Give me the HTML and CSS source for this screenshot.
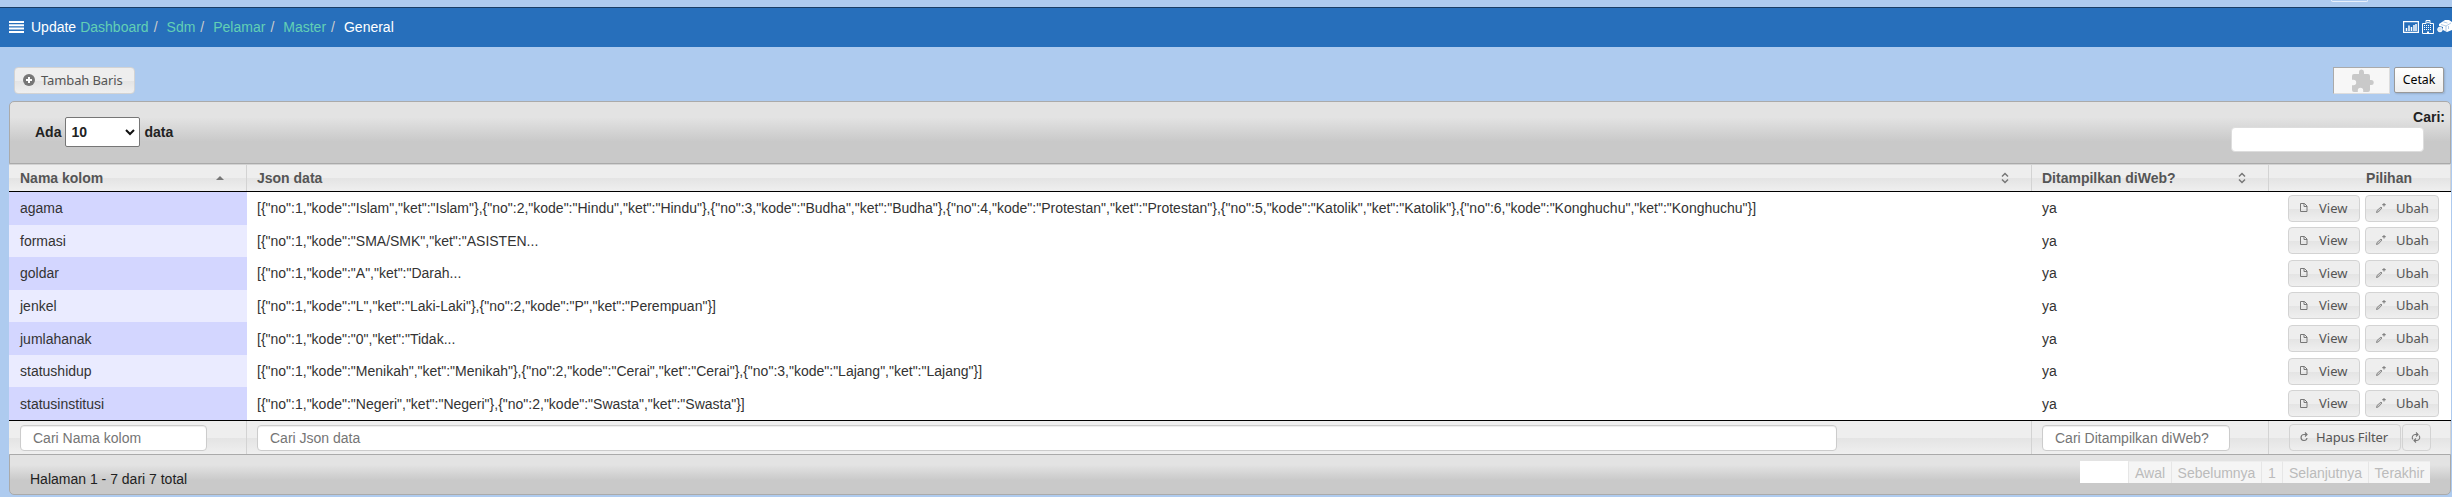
FILE: index.html
```html
<!DOCTYPE html>
<html lang="id">
<head>
<meta charset="utf-8">
<title>General</title>
<link rel="stylesheet" href="styles.css">
</head>
<body>
<svg class="defs" width="0" height="0">
  <symbol id="doc" viewBox="0 0 9 9"><path d="M1.500.5h4l2.500 2.500v5.500h-6.500zM5 .5v3h3" fill="none" stroke="#777"/></symbol>
  <symbol id="pen" viewBox="0 0 10 10"><path d="M.5 9.500l.5-2 4-3.500 1 1-3.700 4z" fill="#ccc" stroke="#777" stroke-width=".8"/><path d="M8 0v3.500M6.200 1.700h3.600" stroke="#777" fill="none"/></symbol>
  <symbol id="sort" viewBox="0 0 8 12"><path d="M1 4.500l3-3 3 3M1 7.500l3 3 3-3" fill="none" stroke="#777" stroke-width="1.500"/></symbol>
</svg>
<div class="strip"><span class="tab"></span></div>
<nav class="navbar">
  <svg class="bars" width="15" height="12" viewBox="0 0 15 12"><path d="M0 1h15M0 4.300h15M0 7.600h15M0 10.900h15" stroke="#fff" stroke-width="2"/></svg>
  <span class="brand">Update</span>
  <a>Dashboard</a><i>/</i><a>Sdm</a><i>/</i><a>Pelamar</a><i>/</i><a>Master</a><i>/</i><b>General</b>
  <span class="tools">
    <svg width="16" height="12" viewBox="0 0 16 12"><path d="M.6.6h14.800v10.800H.6z" fill="none" stroke="#fff" stroke-width="1.200"/><path d="M3.500 10V7M6 10V4.500M8.500 10V6M11 10V4M13 10V3" stroke="#fff" stroke-width="1.500"/></svg>
    <svg width="12" height="14" viewBox="0 0 12 14"><path d="M.5 13.500V3.500H4V.5h4v3h3.500v10z" fill="none" stroke="#fff"/><path d="M2 5.500h8M2 7.500h8M2 9.500h8" stroke="#fff" stroke-dasharray="1 1" stroke-width="1.200"/><path d="M5 1.500v2M7 1.500v2M5 2.500h2" stroke="#fff" stroke-width=".7"/><path d="M5 11.500h2V14H5z" fill="#fff"/></svg>
    <svg width="15" height="14" viewBox="0 0 15 14"><path fill="#fff" d="M2 4l6-4h4l3 2v8l-5 2-4-2V7L2 6z"/><circle cx="3" cy="9.500" r="2.300" fill="#d8e6f5" stroke="#fff"/><path d="M4 4.500l5 1.500 5-3M9 6v5M6.500 2l4 1M11.500 6v3" fill="none" stroke="#8fb4dc" stroke-width=".7"/></svg>
  </span>
</nav>
<div class="actions">
  <button class="btn add"><svg width="12" height="12" viewBox="0 0 12 12"><circle cx="6" cy="6" r="6" fill="#777"/><path d="M6 3v6M3 6h6" stroke="#fff" stroke-width="2"/></svg>Tambah Baris</button>
  <span class="right">
    <span class="plugin"><svg width="24" height="24" viewBox="0 0 24 24"><path fill="#c9c9c9" d="M21.200 11H20V7a2 2 0 0 0-2-2h-4V3a2.500 2.500 0 0 0-5 0v2H4a2 2 0 0 0-2 2v3.800h1.500a2.700 2.700 0 0 1 0 5.400H2V21a2 2 0 0 0 2 2h3.800v-1.500a2.700 2.700 0 0 1 5.400 0V23H18a2 2 0 0 0 2-2v-5h1.200a2.500 2.500 0 0 0 0-5z"/></svg></span>
    <button class="print">Cetak</button>
  </span>
</div>
<main class="grid">
  <div class="panel top">
    <label class="length">Ada <span class="select">10<svg width="10" height="7" viewBox="0 0 10 7"><path d="M1 1l4 4 4-4" fill="none" stroke="#111" stroke-width="2"/></svg></span> data</label>
    <label class="search">Cari:<input></label>
  </div>
  <div class="row head">
    <div>Nama kolom<svg class="asc" width="8" height="4" viewBox="0 0 8 4"><path d="M0 4l4-4 4 4z" fill="#777"/></svg></div>
    <div>Json data<svg class="both"><use href="#sort"/></svg></div>
    <div>Ditampilkan diWeb?<svg class="both"><use href="#sort"/></svg></div>
    <div>Pilihan</div>
  </div>
  <div class="body">
    <div class="row"><div>agama</div><div>[{"no":1,"kode":"Islam","ket":"Islam"},{"no":2,"kode":"Hindu","ket":"Hindu"},{"no":3,"kode":"Budha","ket":"Budha"},{"no":4,"kode":"Protestan","ket":"Protestan"},{"no":5,"kode":"Katolik","ket":"Katolik"},{"no":6,"kode":"Konghuchu","ket":"Konghuchu"}]</div><div>ya</div><div><button class="btn view"><svg><use href="#doc"/></svg>View</button><button class="btn edit"><svg><use href="#pen"/></svg>Ubah</button></div></div>
    <div class="row"><div>formasi</div><div>[{"no":1,"kode":"SMA/SMK","ket":"ASISTEN...</div><div>ya</div><div><button class="btn view"><svg><use href="#doc"/></svg>View</button><button class="btn edit"><svg><use href="#pen"/></svg>Ubah</button></div></div>
    <div class="row"><div>goldar</div><div>[{"no":1,"kode":"A","ket":"Darah...</div><div>ya</div><div><button class="btn view"><svg><use href="#doc"/></svg>View</button><button class="btn edit"><svg><use href="#pen"/></svg>Ubah</button></div></div>
    <div class="row"><div>jenkel</div><div>[{"no":1,"kode":"L","ket":"Laki-Laki"},{"no":2,"kode":"P","ket":"Perempuan"}]</div><div>ya</div><div><button class="btn view"><svg><use href="#doc"/></svg>View</button><button class="btn edit"><svg><use href="#pen"/></svg>Ubah</button></div></div>
    <div class="row"><div>jumlahanak</div><div>[{"no":1,"kode":"0","ket":"Tidak...</div><div>ya</div><div><button class="btn view"><svg><use href="#doc"/></svg>View</button><button class="btn edit"><svg><use href="#pen"/></svg>Ubah</button></div></div>
    <div class="row"><div>statushidup</div><div>[{"no":1,"kode":"Menikah","ket":"Menikah"},{"no":2,"kode":"Cerai","ket":"Cerai"},{"no":3,"kode":"Lajang","ket":"Lajang"}]</div><div>ya</div><div><button class="btn view"><svg><use href="#doc"/></svg>View</button><button class="btn edit"><svg><use href="#pen"/></svg>Ubah</button></div></div>
    <div class="row"><div>statusinstitusi</div><div>[{"no":1,"kode":"Negeri","ket":"Negeri"},{"no":2,"kode":"Swasta","ket":"Swasta"}]</div><div>ya</div><div><button class="btn view"><svg><use href="#doc"/></svg>View</button><button class="btn edit"><svg><use href="#pen"/></svg>Ubah</button></div></div>
  </div>
  <div class="row foot">
    <div><input class="f1" placeholder="Cari Nama kolom"></div>
    <div><input class="f2" placeholder="Cari Json data"></div>
    <div><input class="f3" placeholder="Cari Ditampilkan diWeb?"></div>
    <div><button class="btn clear"><svg width="9" height="10" viewBox="0 0 9 10"><path d="M6.500 2.500H4A3 3 0 1 0 7 6M5 .5l2 2-2 2" fill="none" stroke="#777" stroke-width="1.200"/></svg>Hapus Filter</button><button class="btn refresh"><svg width="10" height="11" viewBox="0 0 10 11"><path d="M6.500 2.500H4A3 3 0 0 0 2 7.500M5 .5l2 2-2 2M3.500 8.500H6a3 3 0 0 0 2-5M5 6.500l-2 2 2 2" fill="none" stroke="#777" stroke-width="1.100"/></svg></button></div>
  </div>
  <div class="panel bottom">
    <span class="info">Halaman 1 - 7 dari 7 total</span>
    <div class="pager"><span class="p1">Awal</span><span class="p2">Sebelumnya</span><span class="p3">1</span><span class="p4">Selanjutnya</span><span class="p5">Terakhir</span></div>
  </div>
</main>
</body>
</html>
```
FILE: styles.css
```css
* { box-sizing: border-box; }
body { margin: 0; height: 497px; overflow: hidden; background: #aecbef; font: 14px/20px "Liberation Sans", Arial, sans-serif; color: #333; }
svg { display: block; flex: none; }
.defs { position: absolute; }
.strip { height: 7px; padding-left: 2331px; }
.tab { display: block; width: 37px; height: 2px; border: 1px solid #e8f0fa; border-top: 0; border-radius: 0 0 4px 4px; }
.navbar { height: 40px; border-top: 1px solid #183d66; background: #276fbb; display: flex; align-items: center; padding: 0 0 1px 9px; color: #fff; white-space: nowrap; }
.bars { margin-right: 7px; }
.brand { margin-right: 4px; }
.navbar a { color: #62d0b5; }
.navbar i { font-style: normal; color: #ccc; margin: 0 9px 0 5px; }
.navbar b { font-weight: 400; }
.tools { margin-left: auto; display: flex; align-items: center; gap: 3px; }
.actions { height: 54px; padding: 20px 8px 0 14px; display: flex; justify-content: space-between; align-items: flex-start; }
.right { display: flex; gap: 4px; }
.btn { height: 27px; border: 1px solid #d3d3d3; border-radius: 4px; background: linear-gradient(#eee 50%, #e4e4e4 52%, #efefef); color: #555; font: 13px "Noto Sans", sans-serif; display: flex; align-items: center; padding: 0 0 1px; white-space: nowrap; }
.add { width: 121px; padding-left: 8px; letter-spacing: -.12px; }
.add svg { margin-right: 6px; }
.plugin { width: 57px; height: 27px; border: 1px solid #aaa; border-right-color: #ddd; border-bottom-color: #ddd; background: #f7f7f7; display: grid; place-items: center; }
.print { width: 50px; height: 26px; padding: 0 0 1px; border: 1px solid #999; border-radius: 2px; background: linear-gradient(#fff, #eee); color: #000; font: 12.3px "Noto Sans", sans-serif; box-shadow: 1px 1px 2px rgba(0,0,0,.15); }
.grid { margin-left: 9px; width: 2442px; }
.panel { border: 1px solid #aaa; background: linear-gradient(#e3e3e3 25%, #c9c9c9 65%); display: flex; justify-content: space-between; color: #222; }
.top { height: 63px; border-radius: 5px 5px 0 0; font-weight: 700; }
.length { display: flex; align-items: center; gap: 4px; padding-left: 25px; height: 60px; }
.select { width: 75px; height: 30px; border: 1px solid #767676; border-radius: 2px; background: #fff; display: flex; align-items: center; justify-content: space-between; padding: 0 4px 0 5px; }
.search { display: flex; flex-direction: column; align-items: flex-end; padding: 5px 5px 0 0; }
.search input { width: 193px; height: 25px; margin-right: 21px; border: 1px solid #ddd; border-radius: 4px; background: #fff; }
.row { display: grid; grid-template-columns: 238px 1785px 237px 1fr; }
.row > div { min-width: 0; display: flex; align-items: center; padding-left: 10px; white-space: nowrap; }
.head { height: 28px; border-bottom: 1px solid #000; font-weight: 700; color: #555; }
.head > div, .foot > div { border-right: 1px solid #d3d3d3; background: linear-gradient(#eee 50%, #e4e4e4 52%, #efefef); }
.head > div { border-top: 1px solid #d3d3d3; padding-right: 22px; justify-content: space-between; }
.head > div:last-child { justify-content: flex-end; padding-right: 38px; }
.both { width: 8px; height: 12px; }
.row > div:first-child { padding-left: 11px; }
.body { height: 228px; display: grid; grid-template-rows: repeat(7, 1fr); background: #fff; }
.body .row > div:first-child { background: #eaebff; }
.body .row:nth-child(odd) > div:first-child { background: #d3d6ff; }
.body .row > div:last-child { padding-left: 19px; gap: 5px; }
.view { width: 72px; padding-left: 10px; }
.view svg { width: 9px; height: 9px; margin-right: 11px; }
.edit { width: 74px; padding-left: 10px; }
.edit svg { width: 10px; height: 10px; margin-right: 10px; }
.foot { height: 34px; border-top: 1px solid #000; }
.foot input { height: 26px; border: 1px solid #ccc; border-radius: 4px; padding: 0 12px; font: 14px "Liberation Sans", Arial, sans-serif; box-shadow: inset 0 1px 1px rgba(0,0,0,.075); background: #fff; }
.foot input::placeholder { color: #757575; }
.f1 { width: 187px; }
.f2 { width: 1580px; }
.f3 { width: 188px; }
.foot > div:last-child { padding-left: 20px; gap: 1px; }
.clear { width: 112px; padding-left: 10px; letter-spacing: -.12px; }
.clear svg { margin-right: 7px; }
.refresh { width: 29px; padding-left: 8px; }
.bottom { height: 41px; border-radius: 0 0 5px 5px; padding: 0 20px 0 20px; }
.info { padding-top: 14px; }
.pager { width: 350px; height: 22px; margin-top: 6px; background: #fff; display: flex; justify-content: flex-end; color: #bbb; }
.pager span { background: #f5f5f5; border-left: 1px solid #e6e6e6; text-align: center; line-height: 22px; border-top: 1px solid #eee; }
.p1 { width: 43px; } .p2 { width: 90px; } .p3 { width: 21px; } .p4 { width: 86px; } .p5 { width: 62px; }
```
